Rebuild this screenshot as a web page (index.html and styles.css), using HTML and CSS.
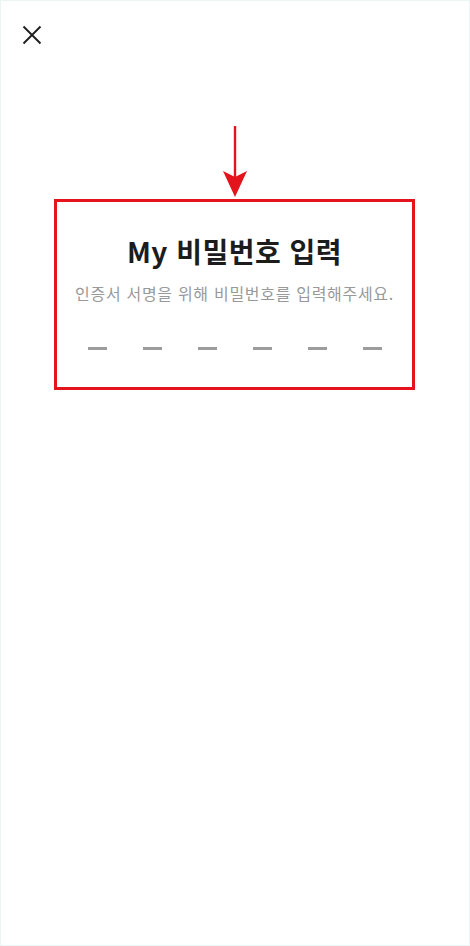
FILE: index.html
```html
<!DOCTYPE html>
<html lang="ko">
<head>
<meta charset="utf-8">
<title>My 비밀번호 입력</title>
<link rel="stylesheet" href="styles.css">
</head>
<body>
<div class="page">
  <header class="topbar">
    <button class="close" aria-label="닫기">
      <svg width="20" height="20" viewBox="0 0 20 20"><path d="M1.5 1.5 L18.5 18.5 M18.5 1.5 L1.5 18.5" stroke="#1f1f1f" stroke-width="1.9" fill="none"/></svg>
    </button>
  </header>
  <div class="pointer">
    <svg width="24" height="72" viewBox="0 0 24 72"><path d="M12 0 V52" stroke="#e3141b" stroke-width="2.4" fill="none"/><polygon points="0,45 12,51 24,45 12,71" fill="#e3141b"/></svg>
  </div>
  <section class="highlight">
    <h1 class="title">My 비밀번호 입력</h1>
    <p class="subtitle">인증서 서명을 위해 비밀번호를 입력해주세요.</p>
    <div class="pins">
      <span class="pin"></span><span class="pin"></span><span class="pin"></span><span class="pin"></span><span class="pin"></span><span class="pin"></span>
    </div>
  </section>
</div>
</body>
</html>
```

FILE: styles.css
```css
* { box-sizing: border-box; }
html, body { margin: 0; padding: 0; background: #fff; }
body { font-family: "Noto Sans CJK KR", "Noto Sans", sans-serif; }
.page {
  width: 470px;
  height: 946px;
  border: 1px solid #eaf6f3;
  display: flex;
  flex-direction: column;
  align-items: center;
}
.topbar {
  align-self: stretch;
  padding: 24px 0 0 21px;
  height: 125px;
}
.close {
  border: 0;
  background: none;
  padding: 0;
  width: 20px;
  height: 20px;
  display: block;
}
.close svg { display: block; }
.pointer {
  height: 73px;
  margin-left: -1px;
}
.pointer svg { display: block; }
.highlight {
  width: 361px;
  margin-left: -1px;
  border: 3px solid #e3141b;
  padding: 31px 0 37px;
  display: flex;
  flex-direction: column;
  align-items: center;
}
.title {
  margin: 0;
  font-size: 28px;
  line-height: 36px;
  font-weight: 600;
  letter-spacing: 0.5px;
  color: #1c1c1c;
}
.subtitle {
  margin: 13px 0 0;
  font-size: 16px;
  line-height: 22px;
  letter-spacing: 0.7px;
  color: #999;
}
.pins {
  margin-top: 43px;
  display: flex;
  gap: 36px;
}
.pin {
  width: 19px;
  height: 3px;
  background: #9c9c9c;
}
```
